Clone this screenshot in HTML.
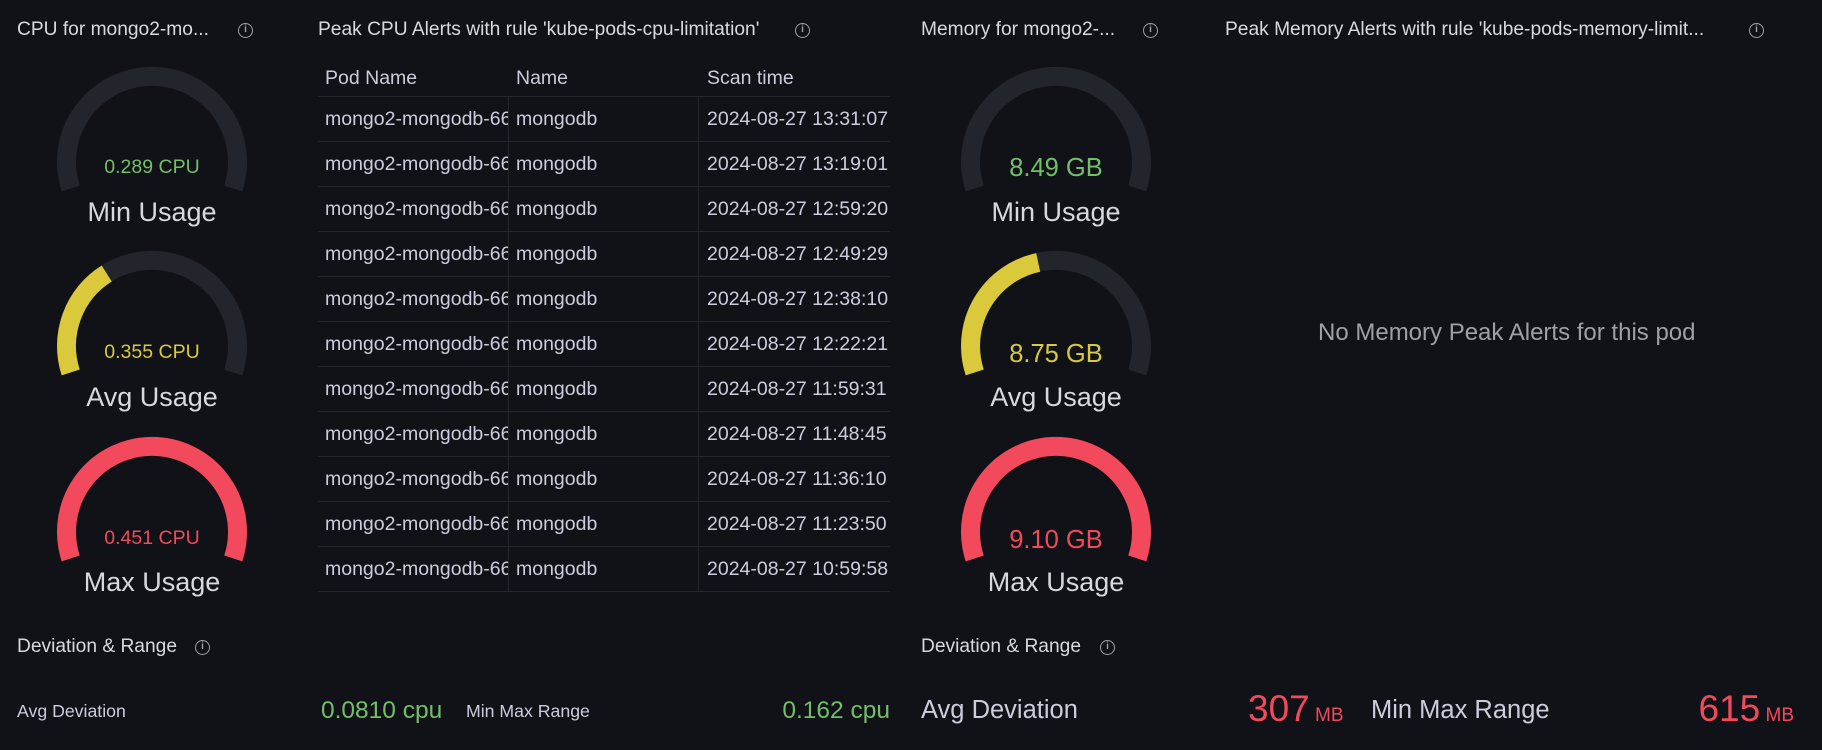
<!DOCTYPE html>
<html><head><meta charset="utf-8"><style>
*{margin:0;padding:0;box-sizing:border-box}
body{width:1822px;height:750px;background:#111217;color:#ccccdc;font-family:"Liberation Sans",sans-serif;position:relative;overflow:hidden}
.a{position:absolute;white-space:nowrap}
.t{font-size:19.2px;color:#d8d9e0}
.i{position:absolute;width:15px;height:15px;border:1.4px solid #9fa0a6;border-radius:50%;font-size:10px;line-height:12px;text-align:center;color:#9fa0a6;font-weight:bold}
.cell{position:absolute;font-size:19.5px;color:#ccccdc;overflow:hidden;white-space:nowrap}
.hl{position:absolute;left:318px;width:572px;height:1px;background:#25262c}
.vl{position:absolute;top:96px;height:495px;width:1px;background:#25262c}
</style></head><body>
<div class="a t" style="left:17px;top:19px">CPU for mongo2-mo...</div><div class="i" style="left:238px;top:23px">i</div>
<div class="a t" style="left:318px;top:19px">Peak CPU Alerts with rule 'kube-pods-cpu-limitation'</div><div class="i" style="left:795px;top:23px">i</div>
<div class="a t" style="left:921px;top:19px">Memory for mongo2-...</div><div class="i" style="left:1143px;top:23px">i</div>
<div class="a t" style="left:1225px;top:19px">Peak Memory Alerts with rule 'kube-pods-memory-limit...</div><div class="i" style="left:1749px;top:23px">i</div>

<svg class="a" style="left:0;top:0" width="1822" height="750">
<g fill="none" stroke-width="19">
<path d="M70.7 188.4 A85.5 85.5 0 1 1 233.3 188.4" stroke="#22252b"/>
<path d="M70.7 372.4 A85.5 85.5 0 1 1 233.3 372.4" stroke="#22252b"/>
<path d="M70.7 372.4 A85.5 85.5 0 0 1 106.7 273.5" stroke="#d9c93b"/>
<path d="M70.7 558.4 A85.5 85.5 0 1 1 233.3 558.4" stroke="#f2495c"/>
<path d="M974.7 188.4 A85.5 85.5 0 1 1 1137.3 188.4" stroke="#22252b"/>
<path d="M974.7 372.4 A85.5 85.5 0 1 1 1137.3 372.4" stroke="#22252b"/>
<path d="M974.7 372.4 A85.5 85.5 0 0 1 1038.2 262.4" stroke="#d9c93b"/>
<path d="M974.7 558.4 A85.5 85.5 0 1 1 1137.3 558.4" stroke="#f2495c"/>
</g>
<g font-family="Liberation Sans,sans-serif" text-anchor="middle">
<text x="152" y="173" font-size="19.5" fill="#73bf69">0.289 CPU</text>
<text x="152" y="221" font-size="27" fill="#d8d9e0">Min Usage</text>
<text x="152" y="358" font-size="19.5" fill="#d9c93b">0.355 CPU</text>
<text x="152" y="406" font-size="27" fill="#d8d9e0">Avg Usage</text>
<text x="152" y="544" font-size="19.5" fill="#f2495c">0.451 CPU</text>
<text x="152" y="591" font-size="27" fill="#d8d9e0">Max Usage</text>
<text x="1056" y="176" font-size="25.5" fill="#73bf69">8.49 GB</text>
<text x="1056" y="221" font-size="27" fill="#d8d9e0">Min Usage</text>
<text x="1056" y="362" font-size="25.5" fill="#d9c93b">8.75 GB</text>
<text x="1056" y="406" font-size="27" fill="#d8d9e0">Avg Usage</text>
<text x="1056" y="548" font-size="25.5" fill="#f2495c">9.10 GB</text>
<text x="1056" y="591" font-size="27" fill="#d8d9e0">Max Usage</text>
</g>
</svg>

<div class="cell" style="left:325px;top:67px">Pod Name</div>
<div class="cell" style="left:516px;top:67px">Name</div>
<div class="cell" style="left:707px;top:67px">Scan time</div>
<div class="hl" style="top:96px"></div>
<div class="vl" style="left:508px"></div><div class="vl" style="left:698px"></div>
<div id="rows"></div>
<script>
var t=["13:31:07","13:19:01","12:59:20","12:49:29","12:38:10","12:22:21","11:59:31","11:48:45","11:36:10","11:23:50","10:59:58"],h="";
for(var k=0;k<11;k++){var y=96+k*45;
h+='<div class="cell" style="left:325px;top:'+(y+12)+'px;width:183px">mongo2-mongodb-66</div>'+
'<div class="cell" style="left:516px;top:'+(y+12)+'px">mongodb</div>'+
'<div class="cell" style="left:707px;top:'+(y+12)+'px">2024-08-27 '+t[k]+'</div>'+
'<div class="hl" style="top:'+(y+45)+'px"></div>';}
document.getElementById("rows").innerHTML=h;
</script>

<div class="a" style="left:1318px;top:319px;font-size:24px;color:#9fa0a6">No Memory Peak Alerts for this pod</div>

<div class="a t" style="left:17px;top:636px">Deviation &amp; Range</div><div class="i" style="left:195px;top:640px">i</div>
<div class="a t" style="left:921px;top:636px">Deviation &amp; Range</div><div class="i" style="left:1100px;top:640px">i</div>

<div class="a" style="left:17px;top:701px;font-size:17.7px">Avg Deviation</div>
<div class="a" style="left:321px;top:697px;font-size:24.5px;color:#73bf69">0.0810 cpu</div>
<div class="a" style="left:466px;top:701px;font-size:17.7px">Min Max Range</div>
<div class="a" style="right:932px;top:697px;font-size:24.5px;color:#73bf69">0.162 cpu</div>

<div class="a" style="left:921px;top:696px;font-size:25.5px">Avg Deviation</div>
<div class="a" style="left:1248px;top:688px;font-size:37px;color:#f2495c">307<span style="font-size:19px"> MB</span></div>
<div class="a" style="left:1371px;top:696px;font-size:25.5px">Min Max Range</div>
<div class="a" style="right:28px;top:688px;font-size:37px;color:#f2495c">615<span style="font-size:19px"> MB</span></div>
</body></html>
